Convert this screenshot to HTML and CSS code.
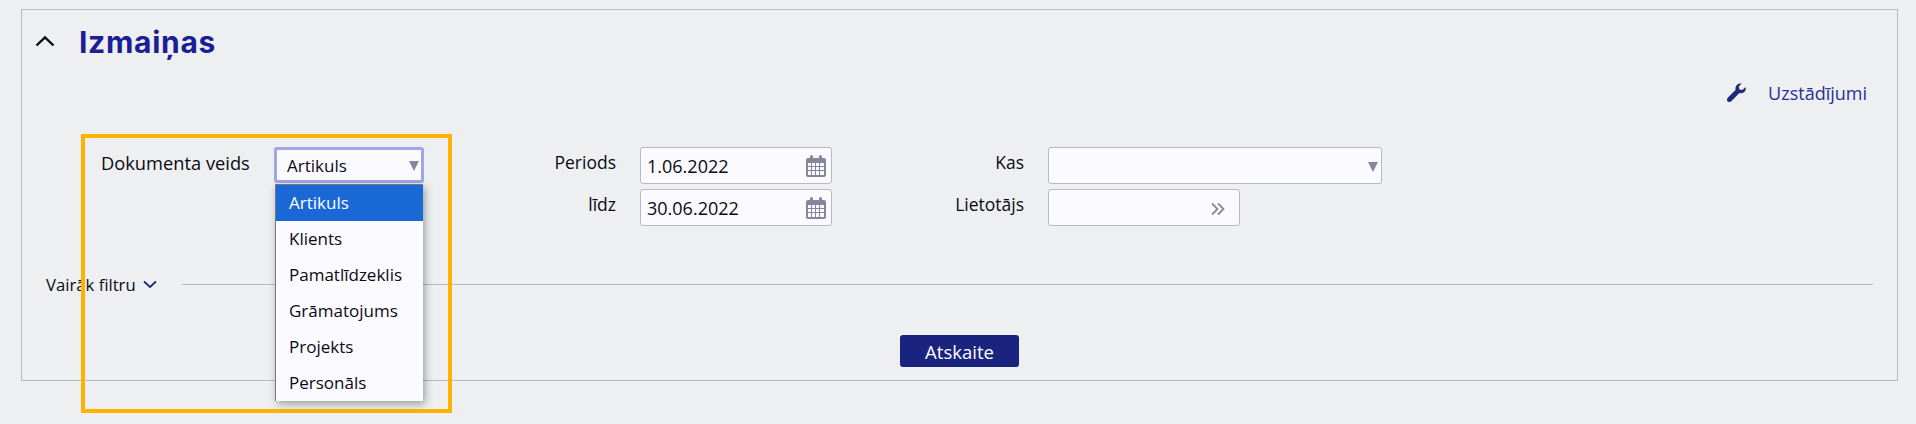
FILE: index.html
```html
<!DOCTYPE html>
<html lang="en">
<head>
  <meta charset="UTF-8" />
  <title>Izmaiņas</title>
  <link rel="stylesheet" href="styles.css">
</head>
<body>
  <section class="panel">
    <header class="panel-head">
      <svg class="toggle" width="20" height="12" viewBox="0 0 20 12"><path d="M1.500 10.500 L10 2.500 L18.500 10.500" fill="none" stroke="#0a0a14" stroke-width="2.400"/></svg>
      <h1>Izmaiņas</h1>
    </header>

    <div class="settings">
      <svg class="wrench" width="20" height="20" viewBox="0 0 20 20"><path d="M19.600 4 c.6 2.400-.2 4.500-2 5.600 -1.300.8-2.900.9-4.200.3 L5.600 17.900 c-1.200 1.300-2.800 1.500-3.900.5 -1.100-1-.9-2.700.3-3.900 L9.700 6.700 C9.200 5.200 9.500 3.500 10.600 2.200 11.900.7 13.800.1 15.700.6 L12.800 3.500 13.400 6.400 16.400 7Z" fill="#1e2a78"/></svg>
      <a class="settings-link">Uzstādījumi</a>
    </div>

    <div class="filters">
      <label class="lbl-doc">Dokumenta veids</label>
      <div class="select focused">
        <span>Artikuls</span>
        <i class="arrow"></i>
        <ul class="dropdown">
          <li class="active">Artikuls</li>
          <li>Klients</li>
          <li>Pamatlīdzeklis</li>
          <li>Grāmatojums</li>
          <li>Projekts</li>
          <li>Personāls</li>
        </ul>
      </div>

      <div class="col col-period">
        <div class="row">
          <label>Periods</label>
          <div class="input date"><span>1.06.2022</span>
            <svg class="cal" width="20" height="22" viewBox="0 0 20 22"><use href="#cal"/></svg>
          </div>
        </div>
        <div class="row">
          <label>līdz</label>
          <div class="input date"><span>30.06.2022</span>
            <svg class="cal" width="20" height="22" viewBox="0 0 20 22"><use href="#cal"/></svg>
          </div>
        </div>
      </div>

      <div class="col col-who">
        <div class="row">
          <label>Kas</label>
          <div class="input wide"><i class="arrow"></i></div>
        </div>
        <div class="row">
          <label>Lietotājs</label>
          <div class="input">
            <svg class="more" width="14" height="14" viewBox="0 0 14 14"><path d="M1 1.500 L6.500 7 L1 12.500 M7 1.500 L12.500 7 L7 12.500" fill="none" stroke="#85889c" stroke-width="1.800"/></svg>
          </div>
        </div>
      </div>
    </div>

    <div class="more-filters">
      <span>Vairāk filtru</span>
      <svg width="14" height="9" viewBox="0 0 14 9"><path d="M1 1.500 L7 7 L13 1.500" fill="none" stroke="#1e2a78" stroke-width="1.800"/></svg>
      <div class="rule"></div>
    </div>

    <div class="actions">
      <button class="btn">Atskaite</button>
    </div>

    <div class="highlight"></div>
  </section>

  <svg width="0" height="0" class="defs">
    <symbol id="cal" viewBox="0 0 20 22">
      <path fill-rule="evenodd" fill="#85889c" d="M2 3h2V1.500a1.500 1.500 0 0 1 3 0V3h6V1.500a1.500 1.500 0 0 1 3 0V3h2a2 2 0 0 1 2 2v15a2 2 0 0 1-2 2H2a2 2 0 0 1-2-2V5a2 2 0 0 1 2-2zM2 8v3h3V8zm4 0v3h3V8zm4 0v3h3V8zm4 0v3h4V8zM2 12v3h3v-3zm4 0v3h3v-3zm4 0v3h3v-3zm4 0v3h4v-3zM2 16v4h3v-4zm4 0v4h3v-4zm4 0v4h3v-4zm4 0v4h4v-4z"/>
    </symbol>
  </svg>
</body>
</html>
```

FILE: styles.css
```css
* {
  box-sizing: border-box;
}

body {
  margin: 0;
  padding: 9px 18px 0 21px;
  height: 424px;
  overflow: hidden;
  background: #eeeff1;
  color: #0a0a14;
  font-family: "Open Sans", "Noto Sans", sans-serif;
  font-size: 17px;
}

.defs {
  position: absolute;
}

.panel {
  position: relative;
  height: 372px;
  border: 1px solid #b4bac9;
}

.panel-head {
  display: flex;
  align-items: center;
  height: 64px;
  padding-left: 13px;
}

.toggle {
  margin-right: 24px;
  margin-top: -3px;
}

h1 {
  margin: 0;
  font-family: Inter, sans-serif;
  font-size: 30px;
  font-weight: 700;
  letter-spacing: 0.7px;
  color: #1a1f96;
}

.settings {
  display: flex;
  align-items: center;
  justify-content: flex-end;
  height: 20px;
  margin-top: 9px;
  padding-right: 30px;
}

.wrench {
  margin-right: 22px;
}

.settings-link {
  color: #2a2f9a;
  font-size: 18px;
}

.filters {
  display: flex;
  align-items: flex-start;
  margin-top: 44px;
  padding-left: 79px;
}

.filters label {
  line-height: 31px;
}

.lbl-doc {
  width: 173px;
  font-size: 18.300px;
}

.select {
  position: relative;
  display: flex;
  align-items: center;
  width: 150px;
  height: 36px;
  padding-left: 10px;
  background: #fbfbff;
  border: 3px solid #a0a6e8;
  border-radius: 3px;
}

.arrow {
  position: absolute;
  right: 3px;
  top: 50%;
  margin-top: -4px;
  border-left: 5px solid transparent;
  border-right: 5px solid transparent;
  border-top: 10px solid #85889c;
}

.select .arrow {
  right: 2px;
}

.dropdown {
  position: absolute;
  left: -2px;
  top: 34px;
  width: 148px;
  margin: 0;
  padding: 0;
  list-style: none;
  background: #fbfbff;
  border-top: 1px solid #777;
  border-left: 1px solid #777;
  box-shadow: 2px 3px 8px rgba(0, 0, 0, 0.35);
  z-index: 2;
}

.dropdown li {
  height: 36px;
  padding-left: 13px;
  line-height: 36px;
}

.dropdown li.active {
  background: #1a68d6;
  color: #fff;
}

.col {
  display: flex;
  flex-direction: column;
  gap: 5px;
}

.col-period {
  margin-left: 40px;
  width: 416px;
}

.row {
  display: flex;
  align-items: flex-start;
}

.row label {
  width: 176px;
  padding-right: 24px;
  text-align: right;
  font-size: 17.500px;
}

.col-who .row label {
  width: 168px;
}

.input {
  position: relative;
  display: flex;
  align-items: center;
  justify-content: space-between;
  width: 192px;
  height: 37px;
  padding: 0 5px 0 6px;
  background: #fbfbff;
  border: 1px solid #b4bac9;
  border-radius: 3px;
  font-size: 18px;
}

.input.wide {
  width: 334px;
}

.input .more {
  position: absolute;
  right: 14px;
  top: 12px;
}

.more-filters {
  display: flex;
  align-items: center;
  margin-top: 44px;
  padding: 0 24px 0 24px;
  height: 28px;
  font-size: 16.700px;
}

.more-filters svg {
  margin-left: 7px;
}

.rule {
  flex: 1;
  height: 1px;
  margin-left: 25px;
  background: #b4bac9;
}

.actions {
  display: flex;
  justify-content: center;
  margin-top: 37px;
}

.btn {
  width: 119px;
  height: 32px;
  padding: 0;
  background: #1a237e;
  color: #fff;
  border: none;
  border-radius: 3px;
  font-family: inherit;
  font-size: 18.500px;
}

.highlight {
  position: absolute;
  left: 59px;
  top: 124px;
  width: 371px;
  height: 279px;
  border: 4px solid #ffb300;
  pointer-events: none;
}
```
